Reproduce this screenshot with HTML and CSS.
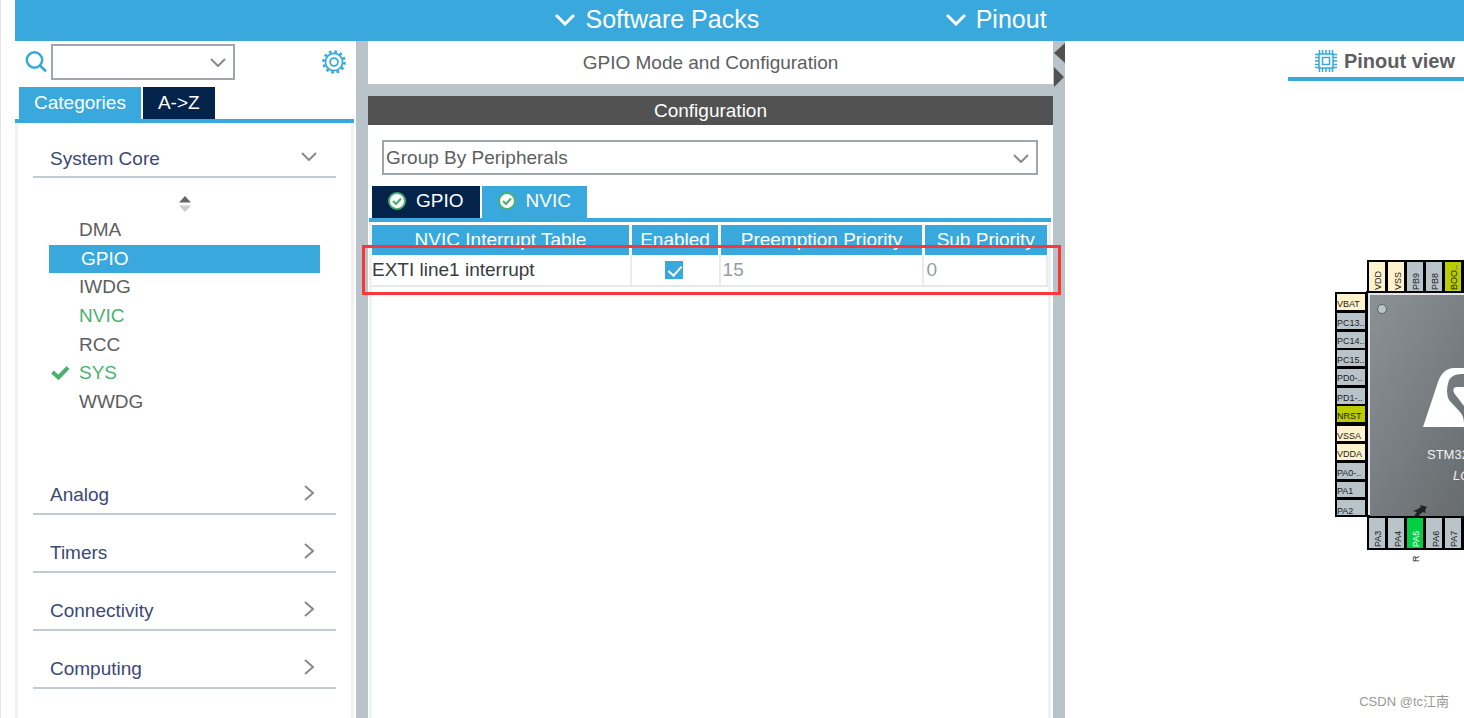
FILE: index.html
```html
<!DOCTYPE html>
<html lang="en">
<head>
<meta charset="utf-8">
<title>Pinout &amp; Configuration</title>
<link rel="stylesheet" href="styles.css">
</head>
<body>
<div class="app">
  <header class="topbar">
    <button class="menu menu-packs" type="button">
      <svg class="menu-icon" viewBox="0 0 20 13"><path d="M1 2l9 9 9-9"/></svg>Software Packs
    </button>
    <button class="menu" type="button">
      <svg class="menu-icon" viewBox="0 0 20 13"><path d="M1 2l9 9 9-9"/></svg>Pinout
    </button>
  </header>

  <main class="workspace">
    <aside class="sidebar">
      <div class="search-row">
        <label class="search-label" for="search" aria-label="Search">
          <svg class="search-icon" viewBox="0 0 22 22"><circle cx="9.500" cy="9" r="7.700"/><path d="M15 14.500l6 6"/></svg>
        </label>
        <span class="select-box search-box">
          <select id="search"><option></option></select>
          <svg class="chevron" viewBox="0 0 16 9"><path d="M1 1l7 7 7-7"/></svg>
        </span>
        <button class="gear" type="button" aria-label="Settings">
          <svg viewBox="-12 -12 24 24"><circle r="8.600"/><circle class="teeth" r="10.500"/><circle r="3.900"/></svg>
        </button>
      </div>
      <div class="tabs side-tabs">
        <button class="tab tab-on" type="button">Categories</button>
        <button class="tab" type="button">A-&gt;Z</button>
      </div>
      <div class="tab-line"></div>
      <div class="panel categories">
        <button class="category" type="button">System Core
          <svg class="chevron" viewBox="0 0 16 9"><path d="M1 1l7 7 7-7"/></svg>
        </button>
        <div class="peripherals">
          <svg class="sort-icon" viewBox="0 0 12 16"><path class="sort-up" d="M0 6.500L6 0l6 6.500z"/><path class="sort-down" d="M0 9.500L6 16l6-6.500z"/></svg>
          <ul class="peripheral-list">
            <li>DMA</li>
            <li class="selected">GPIO</li>
            <li>IWDG</li>
            <li class="active">NVIC</li>
            <li>RCC</li>
            <li class="active"><svg class="tick" viewBox="0 0 20 16"><path d="M2.500 7l6 5.500L18 2.500"/></svg>SYS</li>
            <li>WWDG</li>
          </ul>
        </div>
        <button class="category" type="button">Analog
          <svg class="chevron-right" viewBox="0 0 10 16"><path d="M1 1l8 7-8 7"/></svg>
        </button>
        <button class="category" type="button">Timers
          <svg class="chevron-right" viewBox="0 0 10 16"><path d="M1 1l8 7-8 7"/></svg>
        </button>
        <button class="category" type="button">Connectivity
          <svg class="chevron-right" viewBox="0 0 10 16"><path d="M1 1l8 7-8 7"/></svg>
        </button>
        <button class="category" type="button">Computing
          <svg class="chevron-right" viewBox="0 0 10 16"><path d="M1 1l8 7-8 7"/></svg>
        </button>
      </div>
    </aside>

    <div class="divider"></div>

    <section class="config">
      <h1 class="config-title">GPIO Mode and Configuration</h1>
      <h2 class="config-bar">Configuration</h2>
      <div class="config-body">
        <span class="select-box group-box">
          <select aria-label="Grouping"><option>Group By Peripherals</option></select>
          <svg class="chevron" viewBox="0 0 16 9"><path d="M1 1l7 7 7-7"/></svg>
        </span>
        <div class="tabs config-tabs">
          <button class="tab" type="button"><svg class="badge" viewBox="0 0 18 18"><circle cx="9" cy="9" r="8"/><path d="M5 9l3 3 5-5.500"/></svg>GPIO</button>
          <button class="tab tab-on" type="button"><svg class="badge" viewBox="0 0 18 18"><circle cx="9" cy="9" r="8"/><path d="M5 9l3 3 5-5.500"/></svg>NVIC</button>
        </div>
        <div class="tab-line"></div>
        <div class="panel nvic">
          <table>
            <colgroup><col class="col-name"><col class="col-enabled"><col class="col-preempt"><col class="col-sub"></colgroup>
            <thead>
              <tr><th>NVIC Interrupt Table</th><th>Enabled</th><th>Preemption Priority</th><th>Sub Priority</th></tr>
            </thead>
            <tbody>
              <tr><td>EXTI line1 interrupt</td><td class="check-cell"><input type="checkbox" checked aria-label="EXTI line1 interrupt enabled"></td><td class="muted">15</td><td class="muted">0</td></tr>
            </tbody>
          </table>
          <div class="highlight"></div>
        </div>
      </div>
    </section>

    <div class="divider">
      <svg class="split-arrows" viewBox="0 0 12 46"><path d="M12 2v20L1 12zM1 26v20l10-10z"/></svg>
    </div>

    <section class="pinout">
      <button class="view-tab" type="button">
        <svg class="chip-icon" viewBox="0 0 22 22"><rect x="4" y="4" width="14" height="14"/><rect x="7.500" y="7.500" width="7" height="7"/><path d="M4.500 0v4M7.500 0v4M11 0v4M14.500 0v4M17.500 0v4M4.500 18v4M7.500 18v4M11 18v4M14.500 18v4M17.500 18v4M0 4.500h4M0 7.500h4M0 11h4M0 14.500h4M0 17.500h4M18 4.500h4M18 7.500h4M18 11h4M18 14.500h4M18 17.500h4"/></svg>
        Pinout view
      </button>
      <svg class="chip" viewBox="0 0 134 315">
        <defs>
          <linearGradient id="body" x1="0" y1="0" x2="1" y2="1"><stop offset="0" stop-color="#8b9296"/><stop offset="1" stop-color="#63676a"/></linearGradient>
        </defs>
        <g class="pins">
          <rect class="power" x="38" y="6" width="18" height="31"/><rect class="power" x="57" y="6" width="18" height="31"/><rect x="76" y="6" width="18" height="31"/><rect x="95" y="6" width="18" height="31"/><rect class="boot" x="114" y="6" width="18" height="31"/><rect x="133" y="6" width="18" height="31"/>
          <rect class="power" x="6" y="38" width="30" height="18"/><rect x="6" y="57" width="30" height="18"/><rect x="6" y="76" width="30" height="18"/><rect x="6" y="94" width="30" height="18"/><rect x="6" y="113" width="30" height="18"/><rect x="6" y="132" width="30" height="18"/><rect class="boot" x="6" y="150" width="30" height="18"/><rect class="power" x="6" y="170" width="30" height="17"/><rect class="power" x="6" y="188" width="30" height="18"/><rect x="6" y="207" width="30" height="18"/><rect x="6" y="226" width="30" height="17"/><rect x="6" y="244" width="30" height="17"/>
          <rect x="38" y="262" width="18" height="32"/><rect x="57" y="262" width="18" height="32"/><rect class="used" x="76" y="262" width="18" height="32"/><rect x="95" y="262" width="18" height="32"/><rect x="114" y="262" width="18" height="32"/><rect x="133" y="262" width="18" height="32"/>
        </g>
        <rect class="chip-edge" x="36" y="36" width="120" height="226"/>
        <rect x="40" y="40" width="117" height="221" fill="url(#body)"/>
        <path class="chip-shine" d="M39 260V39h100"/>
        <circle class="dot" cx="52" cy="54" r="4.500"/>
        <path class="logo" d="M93 172L108 127Q113 113 124 113H134V119Q123 118 119 125Q115 137 119 145L130 157Q134 161 134 169V172zM134 137V151L124 138Q122 133 126 132L134 132z"/>
        <g class="pin-names">
          <text x="7" y="52">VBAT</text><text x="7" y="71">PC13..</text><text x="7" y="89">PC14..</text><text x="7" y="108">PC15..</text><text x="7" y="126">PD0-..</text><text x="7" y="146">PD1-..</text><text x="7" y="164">NRST</text><text x="7" y="184">VSSA</text><text x="7" y="202">VDDA</text><text x="7" y="221">PA0-..</text><text x="7" y="239">PA1</text><text x="7" y="259">PA2</text>
          <text transform="translate(51 35) rotate(-90)">VDD</text><text transform="translate(71 35) rotate(-90)">VSS</text><text transform="translate(89 35) rotate(-90)">PB9</text><text transform="translate(108 35) rotate(-90)">PB8</text><text transform="translate(127 35) rotate(-90)">BOO..</text>
          <text transform="translate(51 292) rotate(-90)">PA3</text><text transform="translate(71 292) rotate(-90)">PA4</text><text class="on-green" transform="translate(89 292) rotate(-90)">PA5</text><text transform="translate(109 292) rotate(-90)">PA6</text><text transform="translate(127 292) rotate(-90)">PA7</text>
          <text transform="translate(89 307) rotate(-90)">R</text>
        </g>
        <path class="pushpin" d="M82 264l5-7-4-1 5-2 3-2-1-2 4 1 3 1-2 3 1 3-3-1-3 2-1 3-3-1z"/>
        <text class="chip-text" x="97" y="204">STM32</text>
        <text class="chip-text package" x="123" y="225">LQ</text>
      </svg>
      <p class="watermark">CSDN @tc江南</p>
    </section>
  </main>
</div>
</body>
</html>
```
FILE: styles.css
```css
* {
  box-sizing: border-box;
}

:root {
  --blue: #39a8dc;
  --navy: #03234b;
  --steel: #b9c4ca;
  --text: #5e5e60;
  --green: #49b170;
}

body {
  margin: 0;
  background: #fff;
  color: var(--text);
  font-family: "Liberation Sans", Arial, "Noto Sans CJK SC", sans-serif;
  font-size: 19px;
  line-height: 24px;
}

button,
select {
  margin: 0;
  padding: 0;
  border: 0;
  background: none;
  color: inherit;
  font: inherit;
}

svg {
  display: block;
  flex: none;
  fill: none;
}

.app {
  display: flex;
  flex-direction: column;
  min-height: 100vh;
  padding-left: 14px;
  border-left: 1px solid #e4e4e6;
}

.topbar {
  display: grid;
  grid-template-columns: 390fr 518fr;
  padding: 0 0 3px 37.3%;
  height: 41px;
  background: var(--blue);
  color: #fff;
  font-size: 25px;
}

.menu {
  display: flex;
  align-items: center;
  gap: 10px;
}

.menu-icon {
  width: 20px;
  height: 13px;
  stroke: #fff;
  stroke-width: 3;
}

.workspace {
  flex: 1;
  display: grid;
  grid-template-columns: minmax(0, 341fr) 12px minmax(0, 685fr) 12px minmax(0, 399fr);
}

.divider {
  background: var(--steel);
}

.split-arrows {
  width: 12px;
  height: 46px;
  fill: #515151;
}

/* Sidebar */

.sidebar {
  display: flex;
  flex-direction: column;
  padding-right: 2px;
}

.search-row {
  display: flex;
  align-items: center;
  gap: 4px;
  padding: 3px 8px 7px 10px;
}

.search-icon {
  width: 22px;
  height: 22px;
  stroke: var(--blue);
  stroke-width: 2.5;
}

.select-box {
  position: relative;
  display: block;
}

.select-box select {
  display: block;
  width: 100%;
  height: 36px;
  padding: 0 30px 0 2px;
  border: 2px solid #a0a6ac;
  border-radius: 0;
  appearance: none;
}

.select-box .chevron {
  position: absolute;
  top: 50%;
  right: 9px;
  margin-top: -4px;
  pointer-events: none;
}

.search-box {
  width: 184px;
}

.chevron {
  width: 16px;
  height: 9px;
  stroke: #8a8a8a;
  stroke-width: 2;
}

.chevron-right {
  width: 10px;
  height: 16px;
  stroke: #8a8a8a;
  stroke-width: 2;
}

.gear {
  margin-left: auto;
}

.gear svg {
  width: 24px;
  height: 24px;
  stroke: var(--blue);
  stroke-width: 1.8;
}

.gear .teeth {
  stroke-width: 2.6;
  stroke-dasharray: 2.75;
}

.tabs {
  display: flex;
  gap: 2px;
}

.tab {
  display: flex;
  align-items: center;
  justify-content: center;
  height: 32px;
  padding-bottom: 1px;
  background: var(--navy);
  color: #fff;
}

.tab-on {
  background: var(--blue);
}

.tab-line {
  height: 4px;
  background: var(--blue);
}

.side-tabs {
  padding-left: 4px;
}

.side-tabs .tab {
  padding: 0 15px;
}

.panel {
  flex: 1;
  border: solid #f0f1f3;
  border-width: 0 3px;
}

.categories {
  padding: 0 15px;
}

.category {
  display: flex;
  align-items: flex-end;
  justify-content: space-between;
  width: 100%;
  height: 58px;
  padding: 0 22px 6px 17px;
  border-bottom: 2px solid #c1ccd1;
  color: #3c4875;
}

.category:first-child {
  height: 55px;
  padding-right: 19px;
  padding-bottom: 5px;
}

.category .chevron {
  margin-bottom: 10px;
}

.category .chevron-right {
  margin-bottom: 6px;
}

.peripherals {
  height: 279px;
  padding: 18px 16px 0;
}

.sort-icon {
  width: 12px;
  height: 16px;
  margin: 0 auto 4px;
}

.sort-up {
  fill: #666;
}

.sort-down {
  fill: #ccc;
}

.peripheral-list {
  display: grid;
  grid-template-rows: repeat(7, 1fr);
  height: 200px;
  margin: 0;
  padding: 0;
  list-style: none;
}

.peripheral-list li {
  position: relative;
  display: flex;
  align-items: center;
  padding-left: 30px;
}

.peripheral-list .selected {
  padding-left: 32px;
  background: var(--blue);
  color: #fff;
}

.peripheral-list .active {
  color: var(--green);
}

.tick {
  position: absolute;
  left: 1px;
  width: 20px;
  height: 16px;
  stroke: var(--green);
  stroke-width: 4;
}

/* Configuration */

.config {
  display: flex;
  flex-direction: column;
}

.config-title {
  margin: 0;
  font-size: 19px;
  font-weight: 400;
  line-height: 43px;
  text-align: center;
}

.config-bar {
  margin: 0;
  border-top: 12px solid var(--steel);
  background: #515251;
  color: #fff;
  font-size: 19px;
  font-weight: 400;
  line-height: 29px;
  text-align: center;
}

.config-body {
  flex: 1;
  display: flex;
  flex-direction: column;
  padding: 0 2px 0 1px;
}

.group-box {
  margin: 15px 13px 11px;
}

.group-box select {
  height: 35px;
}

.config-tabs {
  padding-left: 3px;
}

.config-tabs .tab {
  gap: 10px;
  padding: 0 16px 2px;
}

.badge {
  width: 18px;
  height: 18px;
  fill: #fff;
  stroke: var(--green);
  stroke-width: 2;
}

.nvic {
  position: relative;
}

.nvic table {
  width: 100%;
  border-collapse: collapse;
  table-layout: fixed;
}

.col-name {
  width: 38.3%;
}

.col-enabled {
  width: 13.2%;
}

.col-preempt {
  width: 30.2%;
}

.col-sub {
  width: 18.3%;
}

.nvic th {
  height: 31px;
  padding: 0;
  border: solid #fff;
  border-width: 3px 3px 0 0;
  background: var(--blue);
  color: #fff;
  font-weight: 400;
}

.nvic th:last-child {
  border-right-width: 1px;
}

.nvic td {
  height: 31px;
  padding: 0 2px 0 0;
  border-right: 2px solid #e9ebed;
  border-bottom: 2px solid #e6e8ea;
  color: #3b3b40;
}

.nvic .muted {
  padding-left: 2px;
  color: #9b9ba1;
}

.nvic input {
  display: block;
  position: relative;
  width: 18px;
  height: 18px;
  margin: 0 auto;
  border: 1px solid var(--blue);
  appearance: none;
}

.nvic input:checked {
  background: var(--blue);
}

.nvic input:checked::after {
  content: "";
  position: absolute;
  top: 1px;
  left: 5px;
  width: 6px;
  height: 11px;
  border: solid #fff;
  border-width: 0 2px 2px 0;
  transform: rotate(42deg);
}

.highlight {
  position: absolute;
  top: 23px;
  left: -10px;
  right: -13px;
  height: 50px;
  border: 3px solid #fb3538;
  pointer-events: none;
}

/* Pinout */

.pinout {
  position: relative;
  display: flex;
  flex-direction: column;
  align-items: flex-end;
}

.view-tab {
  display: flex;
  align-items: center;
  gap: 7px;
  height: 40px;
  padding: 4px 9px 0 27px;
  border-bottom: 4px solid var(--blue);
  font-size: 20px;
  font-weight: 700;
}

.chip-icon {
  width: 22px;
  height: 22px;
  stroke: var(--blue);
  stroke-width: 1.5;
}

.chip {
  width: 134px;
  height: 315px;
  margin-top: 174px;
}

.pins rect {
  fill: #b9c4ca;
  stroke: #000;
  stroke-width: 2;
}

.pins .power {
  fill: #fff2cc;
}

.pins .boot {
  fill: #bbcc00;
}

.pins .used {
  fill: #02ce44;
}

.chip-edge {
  fill: #000;
}

.chip-shine {
  stroke: #e4e6e8;
  stroke-width: 2;
}

.dot {
  fill: #b9c4ca;
  stroke: #5d6164;
}

.logo {
  fill: #fff;
}

.pin-names text {
  fill: #222;
  font-size: 9px;
}

.pin-names .on-green {
  fill: #fff;
}

.pushpin {
  fill: #222;
}

.chip-text {
  fill: #f2f2f2;
  font-size: 13px;
}

.package {
  font-style: italic;
}

.watermark {
  margin: auto 15px 4px 0;
  color: #999;
  font-size: 13px;
}
```
